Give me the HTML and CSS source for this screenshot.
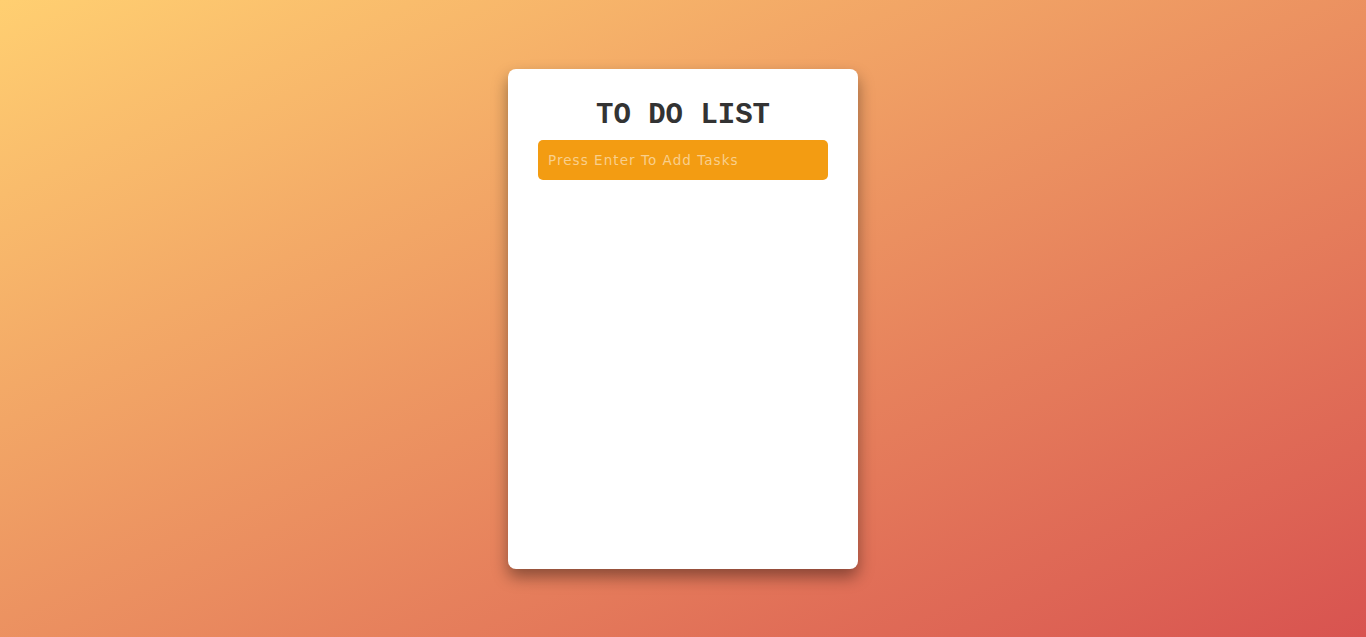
FILE: index.html
```html
<!DOCTYPE html>
<html>
<head>
<meta charset="utf-8">
<link rel="stylesheet" href="styles.css">
</head>
<body>
<div class="page">
  <div class="card">
    <h1 class="title">TO DO LIST</h1>
    <input class="task-input" type="text" placeholder="Press Enter To Add Tasks">
    <ul class="tasks"></ul>
  </div>
</div>
</body>
</html>
```
FILE: styles.css
```css
html, body {
  margin: 0;
  padding: 0;
  height: 100%;
}
body {
  background: linear-gradient(to bottom right, #ffcf71 0%, #d85350 100%);
  font-family: "DejaVu Sans", Verdana, sans-serif;
}
.page {
  display: flex;
  justify-content: center;
  padding-top: 69px;
}
.card {
  width: 350px;
  height: 500px;
  box-sizing: border-box;
  background: #fff;
  border-radius: 8px;
  box-shadow: 0 8px 16px rgba(0, 0, 0, 0.4);
  padding: 28px 30px;
  display: flex;
  flex-direction: column;
}
.title {
  margin: 0 0 6px;
  text-align: center;
  font-family: "Liberation Mono", "Courier New", monospace;
  font-weight: bold;
  font-size: 29px;
  line-height: 37px;
  color: #333;
}
.task-input {
  width: 100%;
  height: 40px;
  box-sizing: border-box;
  border: none;
  outline: none;
  border-radius: 5px;
  background: #f39c12;
  padding: 0 10px;
  font-family: "DejaVu Sans", Verdana, sans-serif;
  font-size: 13.5px;
  letter-spacing: 1.05px;
  color: #fff;
}
.task-input::placeholder {
  color: #f9cf8c;
}
.tasks {
  margin: 0;
  padding: 0;
  list-style: none;
}
```
